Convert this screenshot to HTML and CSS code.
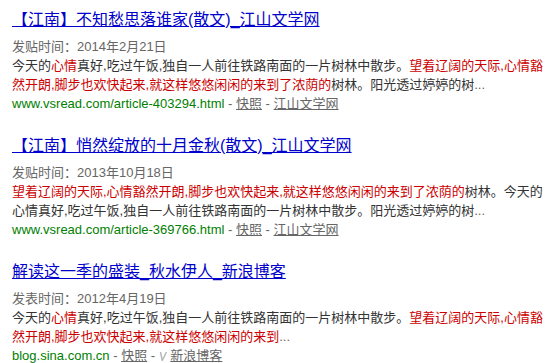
FILE: index.html
```html
<!DOCTYPE html>
<html lang="zh-CN">
<head>
    <meta charset="UTF-8">
    <title>搜索结果</title>
    <link rel="stylesheet" href="styles.css">
</head>
<body>
    <div id="results">
        <div class="result">
            <h3 class="t"><a href="#">【江南】不知愁思落谁家(散文)_江山文学网</a></h3>
            <div class="date">发贴时间：2014年2月21日</div>
            <div class="abstract"><span>今天的</span><em>心情</em><span>真好,吃过午饭,独自一人前往铁路南面的一片树林中散步。</span><em>望着辽阔的天际,心情豁然开朗,脚步也欢快起来,就这样悠悠闲闲的来到了浓荫的</em><span>树林。阳光透过婷婷的树</span><span class="more">...</span></div>
            <div class="site">
                <span class="url">www.vsread.com/article-403294.html</span> - <a href="#">快照</a> - <a href="#">江山文学网</a>
            </div>
        </div>

        <div class="result">
            <h3 class="t"><a href="#">【江南】悄然绽放的十月金秋(散文)_江山文学网</a></h3>
            <div class="date">发贴时间：2013年10月18日</div>
            <div class="abstract"><em>望着辽阔的天际,心情豁然开朗,脚步也欢快起来,就这样悠悠闲闲的来到了浓荫的</em><span>树林。今天的心情真好,吃过午饭,独自一人前往铁路南面的一片树林中散步。阳光透过婷婷的树</span><span class="more">...</span></div>
            <div class="site">
                <span class="url">www.vsread.com/article-369766.html</span> - <a href="#">快照</a> - <a href="#">江山文学网</a>
            </div>
        </div>

        <div class="result">
            <h3 class="t"><a href="#">解读这一季的盛装_秋水伊人_新浪博客</a></h3>
            <div class="date">发表时间：2012年4月19日</div>
            <div class="abstract"><span>今天的</span><em>心情</em><span>真好,吃过午饭,独自一人前往铁路南面的一片树林中散步。</span><em>望着辽阔的天际,心情豁然开朗,脚步也欢快起来,就这样悠悠闲闲的来到</em><span class="more">...</span></div>
            <div class="site">
                <span class="url">blog.sina.com.cn</span> - <a href="#">快照</a> - <svg class="v-icon" width="8" height="10" viewBox="0 0 8 10"><path d="M1.5 1 L3.2 9.5 L7.5 1" fill="none" stroke="#b4b4b4" stroke-width="1.4"/></svg> <a href="#">新浪博客</a>
            </div>
        </div>
    </div>
</body>
</html>
```

FILE: styles.css
```css
body {
    margin: 0;
    font-family: "Liberation Sans", "Noto Sans CJK SC", sans-serif;
    font-size: 13px;
    color: #333;
    background-color: #fff;
}

#results {
    display: flex;
    flex-direction: column;
    gap: 22px;
    padding: 9px 0 0 12px;
}

.result {
    width: 534px;
}

.t {
    margin: 0 0 6px 0;
    font-size: 16px;
    font-weight: normal;
    line-height: 22px;
}

.t a {
    color: #00c;
    text-decoration: underline;
}

.date,
.abstract,
.site {
    line-height: 19px;
}

.date {
    color: #666;
}

.abstract em {
    font-style: normal;
    color: #c00;
}

.more {
    color: #666;
}

.site {
    color: #666;
}

.site a {
    color: #666;
    text-decoration: underline;
}

.url {
    color: #008000;
}

.v-icon {
    vertical-align: -1px;
}
```
